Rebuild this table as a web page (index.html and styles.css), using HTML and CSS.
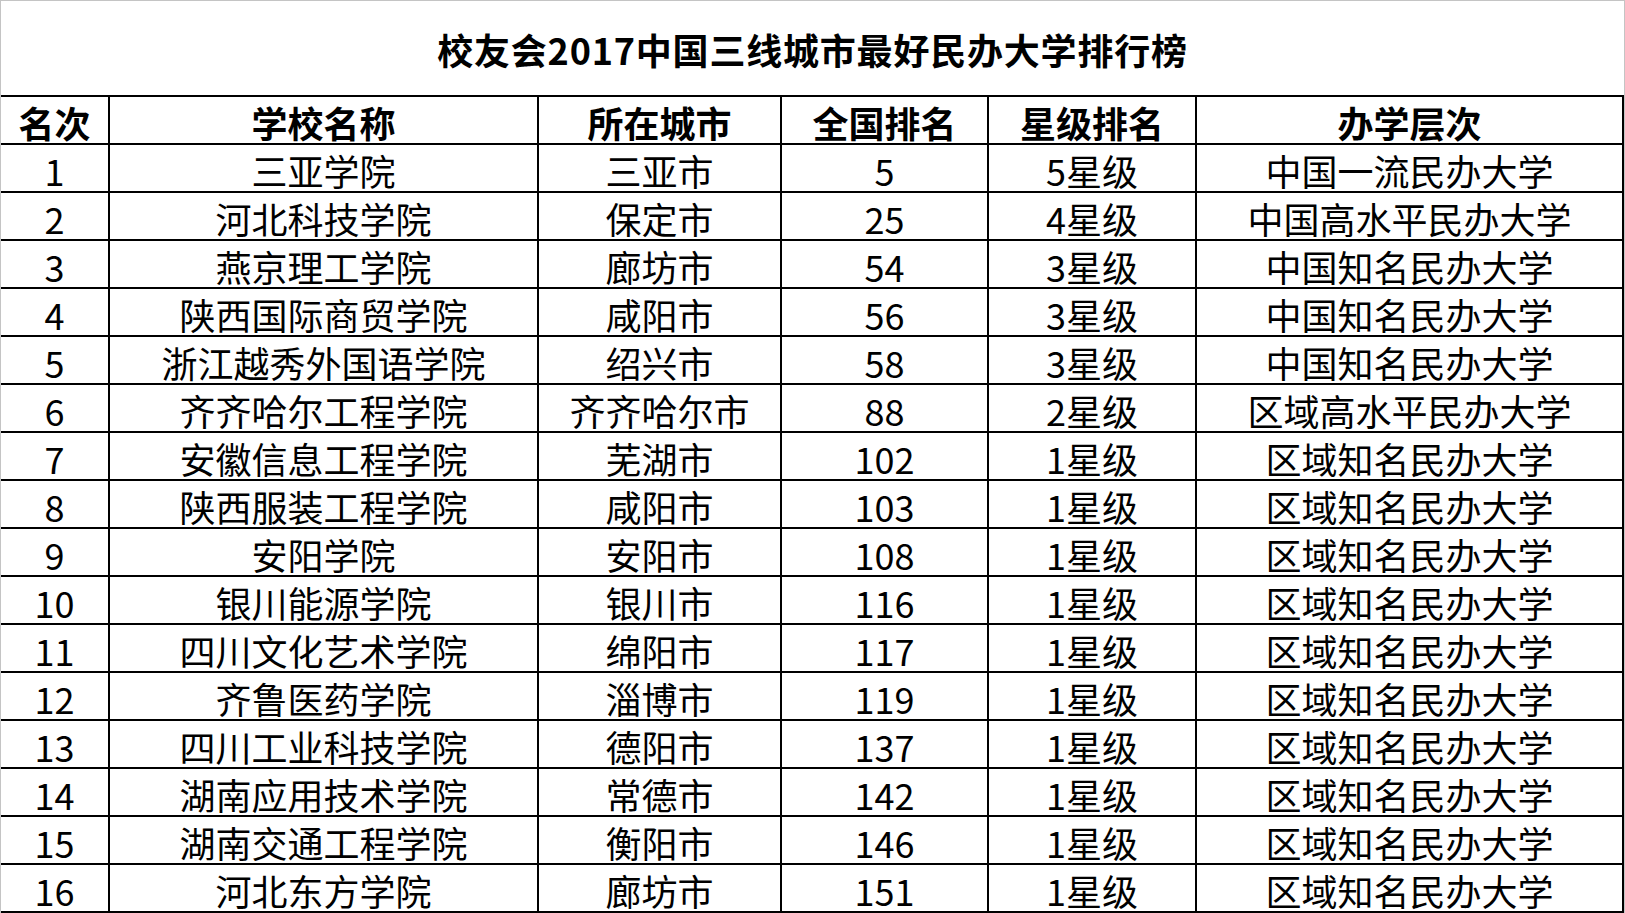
FILE: index.html
```html
<!DOCTYPE html>
<html lang="zh-CN">
<head>
<meta charset="utf-8">
<title>校友会2017中国三线城市最好民办大学排行榜</title>
<link rel="stylesheet" href="styles.css">
</head>
<body>
<div class="sheet">
  <div class="title">校友会2017中国三线城市最好民办大学排行榜</div>
  <div class="grid">
    <div class="cell head">名次</div><div class="cell head">学校名称</div><div class="cell head">所在城市</div><div class="cell head">全国排名</div><div class="cell head">星级排名</div><div class="cell head">办学层次</div>
    <div class="cell">1</div><div class="cell">三亚学院</div><div class="cell">三亚市</div><div class="cell">5</div><div class="cell">5星级</div><div class="cell">中国一流民办大学</div>
    <div class="cell">2</div><div class="cell">河北科技学院</div><div class="cell">保定市</div><div class="cell">25</div><div class="cell">4星级</div><div class="cell">中国高水平民办大学</div>
    <div class="cell">3</div><div class="cell">燕京理工学院</div><div class="cell">廊坊市</div><div class="cell">54</div><div class="cell">3星级</div><div class="cell">中国知名民办大学</div>
    <div class="cell">4</div><div class="cell">陕西国际商贸学院</div><div class="cell">咸阳市</div><div class="cell">56</div><div class="cell">3星级</div><div class="cell">中国知名民办大学</div>
    <div class="cell">5</div><div class="cell">浙江越秀外国语学院</div><div class="cell">绍兴市</div><div class="cell">58</div><div class="cell">3星级</div><div class="cell">中国知名民办大学</div>
    <div class="cell">6</div><div class="cell">齐齐哈尔工程学院</div><div class="cell">齐齐哈尔市</div><div class="cell">88</div><div class="cell">2星级</div><div class="cell">区域高水平民办大学</div>
    <div class="cell">7</div><div class="cell">安徽信息工程学院</div><div class="cell">芜湖市</div><div class="cell">102</div><div class="cell">1星级</div><div class="cell">区域知名民办大学</div>
    <div class="cell">8</div><div class="cell">陕西服装工程学院</div><div class="cell">咸阳市</div><div class="cell">103</div><div class="cell">1星级</div><div class="cell">区域知名民办大学</div>
    <div class="cell">9</div><div class="cell">安阳学院</div><div class="cell">安阳市</div><div class="cell">108</div><div class="cell">1星级</div><div class="cell">区域知名民办大学</div>
    <div class="cell">10</div><div class="cell">银川能源学院</div><div class="cell">银川市</div><div class="cell">116</div><div class="cell">1星级</div><div class="cell">区域知名民办大学</div>
    <div class="cell">11</div><div class="cell">四川文化艺术学院</div><div class="cell">绵阳市</div><div class="cell">117</div><div class="cell">1星级</div><div class="cell">区域知名民办大学</div>
    <div class="cell">12</div><div class="cell">齐鲁医药学院</div><div class="cell">淄博市</div><div class="cell">119</div><div class="cell">1星级</div><div class="cell">区域知名民办大学</div>
    <div class="cell">13</div><div class="cell">四川工业科技学院</div><div class="cell">德阳市</div><div class="cell">137</div><div class="cell">1星级</div><div class="cell">区域知名民办大学</div>
    <div class="cell">14</div><div class="cell">湖南应用技术学院</div><div class="cell">常德市</div><div class="cell">142</div><div class="cell">1星级</div><div class="cell">区域知名民办大学</div>
    <div class="cell">15</div><div class="cell">湖南交通工程学院</div><div class="cell">衡阳市</div><div class="cell">146</div><div class="cell">1星级</div><div class="cell">区域知名民办大学</div>
    <div class="cell">16</div><div class="cell">河北东方学院</div><div class="cell">廊坊市</div><div class="cell">151</div><div class="cell">1星级</div><div class="cell">区域知名民办大学</div>
  </div>
</div>
</body>
</html>
```
FILE: styles.css
```css
html, body {
  margin: 0;
  padding: 0;
  background: #ffffff;
  overflow: hidden;
}

.sheet {
  width: 1625px;
  height: 913px;
  box-sizing: border-box;
  border-top: 1px solid #c4c4c4;
  border-left: 1px solid #c4c4c4;
  border-right: 1px solid #c4c4c4;
  font-family: "Noto Sans CJK SC", "Noto Sans", sans-serif;
  color: #000000;
}

.title {
  height: 94px;
  display: flex;
  align-items: center;
  justify-content: center;
  font-size: 36px;
  line-height: 44px;
  font-weight: 700;
  letter-spacing: 0.8px;
  padding-top: 2px;
  box-sizing: border-box;
}

.grid {
  display: grid;
  grid-template-columns: 107px 427px 241px 205px 206px 425px;
  grid-auto-rows: 46px;
  column-gap: 2px;
  row-gap: 2px;
  padding: 2px 2px 2px 0;
  background: #000000;
}

.cell {
  background: #ffffff;
  display: flex;
  align-items: center;
  justify-content: center;
  font-size: 36px;
  line-height: 40px;
  padding-top: 3px;
  box-sizing: border-box;
  white-space: nowrap;
}

.head {
  font-weight: 700;
}
```
